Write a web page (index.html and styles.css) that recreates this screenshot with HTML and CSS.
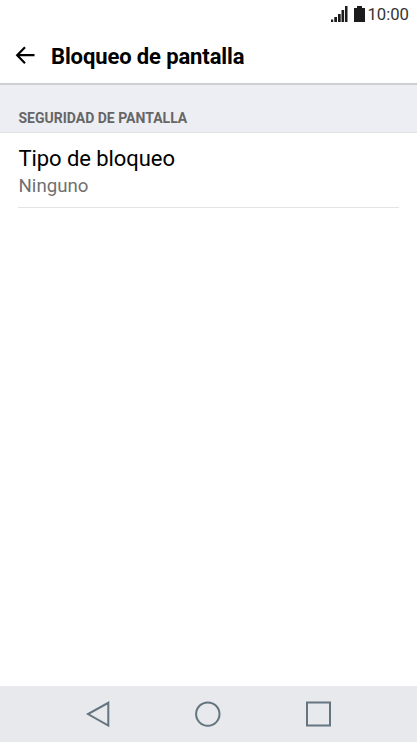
FILE: index.html
```html
<!DOCTYPE html>
<html lang="es">
<head>
<meta charset="utf-8">
<title>Bloqueo de pantalla</title>
<link rel="stylesheet" href="styles.css">
</head>
<body>
<div class="status">
  <svg class="signal" width="17" height="17" viewBox="0 0 17 17"><path d="M0 13.500h2.200v2.500H0zM3.300 11h2.700v5H3.300zM7 8h2.700v8H7zM10.500 4h2.600v12h-2.600zM14 0h2.500v16H14z"/></svg>
  <svg class="battery" width="11" height="17" viewBox="0 0 11 17"><path d="M3 0h5v2h3v14H0V2h3z"/></svg>
  <span class="clock">10:00</span>
</div>
<header class="appbar">
  <svg class="back" width="20" height="20" viewBox="0 0 20 20"><path d="M19.500 9.200H2.500M10 1.200L2.200 9.200l7.800 8"/></svg>
  <h1 class="title">Bloqueo de pantalla</h1>
</header>
<main class="content">
  <h2 class="section">SEGURIDAD DE PANTALLA</h2>
  <div class="item">
    <div class="name">Tipo de bloqueo</div>
    <div class="value">Ninguno</div>
  </div>
</main>
<nav class="navbar">
  <svg width="26" height="28" viewBox="0 0 26 28"><path d="M23.300 2.800v22.700L3 14.100z"/></svg>
  <svg width="26" height="28" viewBox="0 0 26 28"><circle cx="12.800" cy="14.100" r="11.700"/></svg>
  <svg width="26" height="28" viewBox="0 0 26 28"><path d="M2 2.500h23v23H2z"/></svg>
</nav>
</body>
</html>
```

FILE: styles.css
```css
* { box-sizing: border-box; }
body { margin: 0; height: 742px; display: flex; flex-direction: column; background: #fff; font-family: Roboto, sans-serif; overflow: hidden; }
.status { height: 29px; display: flex; align-items: center; justify-content: flex-end; padding-right: 8px; fill: #1c1c1c; }
.battery { margin: 0 2px 0 6px; }
.clock { padding-top: 1px; font-size: 16.7px; line-height: 20px; color: #333; }
.appbar { height: 56px; display: flex; align-items: center; padding-left: 15px; border-bottom: 2px solid #cfcfd1; }
.back { fill: none; stroke: #000; stroke-width: 2.2; }
.title { margin: 2px 0 0 16px; font-size: 22px; line-height: 26px; font-weight: 700; letter-spacing: -0.12px; }
.content { flex: 1; }
.section { margin: 0; height: 48px; padding: 24px 18.5px 0; background: #edeef3; border-bottom: 1px solid #dfe0e2; color: #666; font-size: 14px; line-height: 18px; font-weight: 700; }
.item { margin: 0 18px; height: 75px; padding-top: 12px; border-bottom: 1px solid #e4e4e4; }
.name { padding-left: 0.5px; font-size: 22px; line-height: 28px; letter-spacing: -0.07px; }
.value { padding-left: 0.5px; font-size: 18.7px; line-height: 26px; color: #707070; }
.navbar { height: 56px; display: flex; justify-content: center; align-items: center; gap: 84px; padding-right: 1px; background: #e8e9ed; fill: none; stroke: #657580; stroke-width: 2; }
```
